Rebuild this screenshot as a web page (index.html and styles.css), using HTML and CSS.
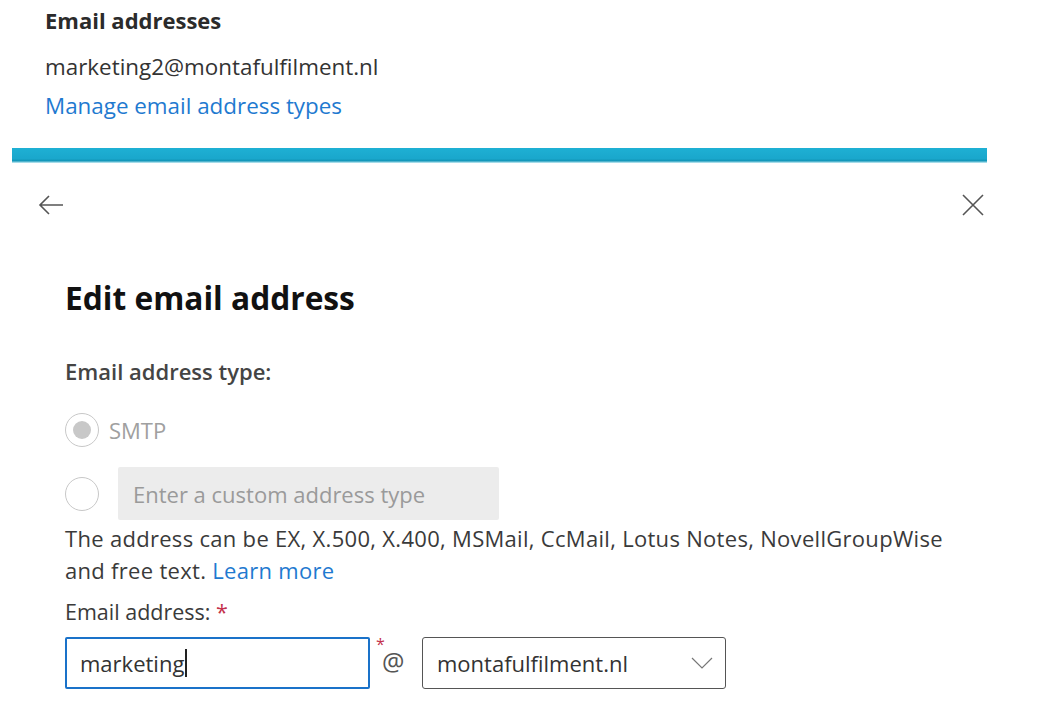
FILE: index.html
```html
<!DOCTYPE html>
<html>
<head>
<meta charset="utf-8">
<link rel="stylesheet" href="styles.css">
</head>
<body>
<section class="top">
  <h3 class="top-title">Email addresses</h3>
  <div class="top-value">marketing2@montafulfilment.nl</div>
  <a class="link top-link">Manage email address types</a>
</section>
<div class="bar"></div>
<div class="nav">
  <svg class="icon" width="30" height="30" viewBox="0 0 30 30"><path d="M27 15H4M13 6l-9 9 9 9" fill="none" stroke="#555" stroke-width="1.6"/></svg>
  <svg class="icon" width="26" height="26" viewBox="0 0 26 26"><path d="M3 3l20 20M23 3L3 23" fill="none" stroke="#555" stroke-width="1.6"/></svg>
</div>
<main class="panel">
  <h1 class="title">Edit email address</h1>
  <div class="label">Email address type:</div>
  <div class="radio-row smtp">
    <span class="radio checked"><span class="dot"></span></span>
    <span class="radio-text">SMTP</span>
  </div>
  <div class="radio-row custom">
    <span class="radio"></span>
    <div class="custom-input">Enter a custom address type</div>
  </div>
  <p class="desc">The address can be EX, X.500, X.400, MSMail, CcMail, Lotus Notes, NovellGroupWise and free text. <a class="link">Learn more</a></p>
  <div class="label label2">Email address: <span class="req">*</span></div>
  <div class="addr-row">
    <div class="addr-input">marketing<span class="caret"></span></div>
    <div class="at-wrap">
      <span class="req small">*</span>
      <span class="at">@</span>
    </div>
    <div class="select">
      <span>montafulfilment.nl</span>
      <svg width="22" height="12" viewBox="0 0 22 12"><path d="M1 1l10 10L21 1" fill="none" stroke="#777" stroke-width="1.2"/></svg>
    </div>
  </div>
</main>
</body>
</html>
```
FILE: styles.css
```css
* { box-sizing: border-box; }
body {
  margin: 0;
  background: #fff;
  font-family: "Open Sans", "Noto Sans", sans-serif;
  color: #333;
  width: 1038px;
  height: 709px;
  overflow: hidden;
}
.top { padding: 6px 0 0 45px; height: 148px; }
.top-title { margin: 0; font-size: 22px; font-weight: 700; color: #2b2b2b; line-height: 28px; }
.top-value { margin-top: 19px; font-size: 22.4px; line-height: 28px; color: #333; }
.top-link { display: block; margin-top: 11px; font-size: 22.4px; line-height: 28px; }
.link { color: #1f7ad0; text-decoration: none; }
.bar {
  margin-left: 12px;
  width: 975px;
  height: 15px;
  background: linear-gradient(#1eb0d4, #1aa7cc 70%, #1296b8 85%, #cfeff7);
}
.nav {
  display: flex;
  justify-content: space-between;
  align-items: center;
  padding: 27px 52px 0 36px;
}
.nav .icon { display: block; }
.panel { padding: 0 0 0 65px; }
.title { margin: 58px 0 0; font-size: 31.7px; font-weight: 700; color: #111; line-height: 40px; }
.label { margin-top: 38px; font-size: 22px; font-weight: 600; color: #444; line-height: 30px; }
.radio-row { display: flex; align-items: center; }
.smtp { margin-top: 27px; height: 34px; }
.radio {
  width: 34px; height: 34px; border-radius: 50%;
  border: 1.5px solid #c8c8c8; background: #fff;
  display: flex; align-items: center; justify-content: center;
  flex: none;
}
.radio .dot { width: 18px; height: 18px; border-radius: 50%; background: #c8c8c8; }
.radio-text { margin-left: 10px; font-size: 22px; color: #a0a0a0; }
.custom { margin-top: 20px; }
.custom-input {
  margin-left: 19px;
  width: 381px; height: 53px;
  background: #ececec;
  border-radius: 2px;
  font-size: 22px; color: #9a9a9a;
  padding: 0 15px;
  display: flex; align-items: center;
}
.desc { margin: 2px 0 0; font-size: 22px; line-height: 32px; color: #3a3a3a; width: 900px; letter-spacing: 0.3px; }
.label2 { margin-top: 11px; font-weight: 400; color: #3a3a3a; font-size: 21.5px; }
.req { color: #c4314b; }
.addr-row { display: flex; align-items: flex-start; margin-top: 10px; }
.addr-input {
  width: 305px; height: 52px;
  border: 2px solid #1a72c9;
  border-radius: 2px;
  font-size: 22px; color: #333;
  padding: 0 13px;
  display: flex; align-items: center;
}
.caret { display: inline-block; width: 1.5px; height: 28px; background: #222; margin-left: 1px; }
.at-wrap { position: relative; width: 52px; height: 52px; flex: none; }
.req.small { position: absolute; left: 6px; top: -2px; font-size: 16px; line-height: 18px; }
.at { position: absolute; left: 12px; top: 9px; font-size: 25px; line-height: 30px; color: #555; }
.select {
  width: 304px; height: 52px;
  border: 1.5px solid #555;
  border-radius: 3px;
  font-size: 22px; color: #333;
  padding: 0 12px 0 14px;
  display: flex; align-items: center; justify-content: space-between;
}
```
